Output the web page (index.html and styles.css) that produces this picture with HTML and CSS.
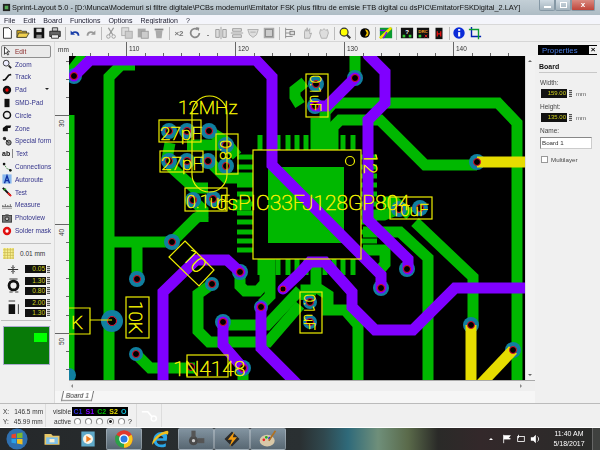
FILE: index.html
```html
<!DOCTYPE html>
<html lang="en">
<head>
<meta charset="utf-8">
<title>Sprint-Layout 5.0</title>
<link rel="stylesheet" href="styles.css">
</head>
<body>
<div class="app">
  <header class="titlebar">
    <svg class="appicon" viewBox="0 0 10 10"><rect x="1" y="1" width="8" height="8" fill="#222"/><rect x="3" y="3" width="4" height="4" fill="#5a5"/></svg>
    <span class="titletext">Sprint-Layout 5.0 - [D:\Munca\Modemuri si filtre digitale\PCBs modemuri\Emitator FSK plus filtru de emisie FTB digital cu dsPIC\EmitatorFSKDigital_2.LAY]</span>
    <div class="winbtns">
      <span class="winbtn"><i class="glyph-min"></i></span>
      <span class="winbtn"><i class="glyph-max"></i></span>
      <span class="winbtn winclose">x</span>
    </div>
  </header>
  <nav class="menubar">
    <span>File</span><span>Edit</span><span>Board</span><span>Functions</span><span>Options</span><span>Registration</span><span>?</span>
  </nav>
  <div class="toolbar">
    <span class="tb"><svg viewBox="0 0 16 16"><path d="M4 2h6l3 3v9H4z" fill="#fff" stroke="#222"/></svg></span>
    <span class="tb"><svg viewBox="0 0 16 16"><path d="M1 5h5l1 1h5v7H1z" fill="#c8a020" stroke="#443"/><path d="M3 8h12l-3 5H1z" fill="#f0d050" stroke="#443"/></svg></span>
    <span class="tb"><svg viewBox="0 0 16 16"><rect x="2" y="2" width="12" height="12" fill="#111"/><rect x="5" y="3" width="6" height="4" fill="#ddd"/><rect x="5" y="10" width="6" height="4" fill="#888"/></svg></span>
    <span class="tb"><svg viewBox="0 0 16 16"><path d="M5 2h6v4H5z" fill="#ccc" stroke="#333"/><path d="M2 6h12v6H2z" fill="#666" stroke="#222"/><path d="M4 10h8v4H4z" fill="#eee" stroke="#333"/></svg></span>
    <span class="sep"></span>
    <span class="tb"><svg viewBox="0 0 16 16"><path d="M12 11c0-4-4-5-7-3" fill="none" stroke="#1a3ea8" stroke-width="2"/><path d="M3 5v5h5z" fill="#1a3ea8"/></svg></span>
    <span class="tb off"><svg viewBox="0 0 16 16"><path d="M4 11c0-4 4-5 7-3" fill="none" stroke="#999" stroke-width="2"/><path d="M13 5v5H8z" fill="#999"/></svg></span>
    <span class="sep"></span>
    <span class="tb off"><svg viewBox="0 0 16 16"><path d="M5 2l5 8M11 2l-5 8" stroke="#999" stroke-width="1.5"/><circle cx="5" cy="12" r="2" fill="none" stroke="#999"/><circle cx="11" cy="12" r="2" fill="none" stroke="#999"/></svg></span>
    <span class="tb off"><svg viewBox="0 0 16 16"><rect x="2" y="2" width="8" height="9" fill="#ddd" stroke="#aaa"/><rect x="6" y="6" width="8" height="8" fill="#ccc" stroke="#aaa"/></svg></span>
    <span class="tb off"><svg viewBox="0 0 16 16"><rect x="2" y="3" width="9" height="10" fill="#aaa"/><rect x="6" y="6" width="8" height="8" fill="#ccc" stroke="#999"/></svg></span>
    <span class="tb off"><svg viewBox="0 0 16 16"><path d="M4 5h8l-1 9H5z" fill="#aaa"/><rect x="3" y="3" width="10" height="2" fill="#888"/></svg></span>
    <span class="sep"></span>
    <span class="tb off txt">×2</span>
    <span class="tb off"><svg viewBox="0 0 16 16"><path d="M13 8a5 5 0 1 1-2-4" fill="none" stroke="#888" stroke-width="2"/><path d="M9 1l4 1-1 4z" fill="#888"/></svg></span>
    <span class="tbarrow"></span>
    <span class="tb off"><svg viewBox="0 0 16 16"><path d="M8 1v14" stroke="#999"/><path d="M2 4h4v9H2zM10 4h4v9h-4z" fill="#ddd" stroke="#999"/></svg></span>
    <span class="tb off"><svg viewBox="0 0 16 16"><path d="M1 8h14" stroke="#999"/><path d="M3 3h10v3H3zM3 10h10v3H3z" fill="#ddd" stroke="#999"/></svg></span>
    <span class="tb off"><svg viewBox="0 0 16 16"><path d="M2 4h12l-2 6-4 3-4-3z" fill="#ddd" stroke="#aaa"/><path d="M5 7h6" stroke="#aaa"/></svg></span>
    <span class="tb off"><svg viewBox="0 0 16 16"><rect x="2" y="2" width="12" height="12" fill="#aaa"/><rect x="4" y="4" width="8" height="8" fill="#ccc" stroke="#888"/></svg></span>
    <span class="sep sep-w"></span>
    <span class="tb off"><svg viewBox="0 0 16 16"><path d="M3 2v12M3 4h8M3 8h5M3 12h8" stroke="#888" fill="none"/><rect x="8" y="6" width="5" height="4" fill="#ddd" stroke="#777"/></svg></span>
    <span class="tb-gap"></span>
    <span class="tb off"><svg viewBox="0 0 16 16"><path d="M4 14V7l1-3 1 2 1-4 1 4 2-3v6l2-1-2 6z" fill="#ddd" stroke="#aaa"/></svg></span>
    <span class="tb off"><svg viewBox="0 0 16 16"><path d="M3 8l1-4 2 1 2-2 2 2 2-1 1 4-2 6H5z" fill="#ddd" stroke="#aaa"/></svg></span>
    <span class="sep sep-w"></span>
    <span class="tb"><svg viewBox="0 0 16 16"><circle cx="7" cy="7" r="4.5" fill="#ff0" stroke="#333" stroke-width="1.4"/><path d="M10 10l4 4" stroke="#333" stroke-width="2.4"/></svg></span>
    <span class="sep"></span>
    <span class="tb"><svg viewBox="0 0 16 16"><circle cx="8" cy="8" r="5.5" fill="#000"/><path d="M8 4a4 4 0 0 1 0 8l2-4z" fill="#f0c000"/></svg></span>
    <span class="sep sep-w"></span>
    <span class="tb"><svg viewBox="0 0 16 16"><rect x="1" y="2" width="14" height="12" fill="#0a9a30"/><path d="M1 14L14 2" stroke="#f0e000" stroke-width="3"/><path d="M1 5h6M5 14l4-7" stroke="#8000ff" stroke-width="1.5"/></svg></span>
    <span class="sep sep-w"></span>
    <span class="tb"><svg viewBox="0 0 16 16"><rect x="1" y="2" width="14" height="12" fill="#111"/><text x="8" y="9" class="tbq">?</text><rect x="3" y="10" width="3" height="3" fill="#3c3"/><rect x="10" y="10" width="3" height="3" fill="#3c3"/></svg></span>
    <span class="tb"><svg viewBox="0 0 16 16"><rect x="1" y="2" width="14" height="12" fill="#111"/><text x="8" y="8" class="tbdrc">DRC</text><rect x="3" y="10" width="3" height="3" fill="#3c3"/><path d="M10 10l3 3M13 10l-3 3" stroke="#e22"/></svg></span>
    <span class="tb"><svg viewBox="0 0 16 16"><rect x="4" y="2" width="8" height="13" fill="#111"/><path d="M6 6v6M10 6v6M6 9h4" stroke="#e11" stroke-width="1.4"/></svg></span>
    <span class="sep"></span>
    <span class="tb"><svg viewBox="0 0 16 16"><circle cx="8" cy="8" r="6.5" fill="#0b2bd8"/><rect x="7" y="7" width="2.4" height="5" fill="#fff"/><rect x="7" y="3.5" width="2.4" height="2" fill="#fff"/></svg></span>
    <span class="tb"><svg viewBox="0 0 16 16"><path d="M4 1v11h11" fill="none" stroke="#0020b0" stroke-width="1.6"/><path d="M1 4h11v11" fill="none" stroke="#0a9a30" stroke-width="1.6"/></svg></span>
  </div>

  <main class="workspace">
    <aside class="tools">
      <div class="tool active"><svg class="ti" viewBox="0 0 12 12"><path d="M3 1v9l2-2 2 3 1-1-2-3h3z" fill="#fff" stroke="#222"/></svg><span class="edit">Edit</span></div>
      <div class="tool"><svg class="ti" viewBox="0 0 12 12"><circle cx="5" cy="5" r="3.5" fill="#eef" stroke="#222"/><path d="M8 8l3 3" stroke="#222" stroke-width="2"/></svg><span>Zoom</span></div>
      <div class="tool"><svg class="ti" viewBox="0 0 12 12"><path d="M1 10l3-1 4-5 3-1" fill="none" stroke="#111" stroke-width="2"/></svg><span>Track</span></div>
      <div class="tool"><svg class="ti" viewBox="0 0 12 12"><circle cx="6" cy="6" r="5" fill="#111"/><circle cx="6" cy="6" r="2" fill="#e00"/></svg><span>Pad</span><i class="drop"></i></div>
      <div class="tool"><svg class="ti" viewBox="0 0 12 12"><rect x="3" y="1" width="6" height="10" fill="#111"/></svg><span>SMD-Pad</span></div>
      <div class="tool"><svg class="ti" viewBox="0 0 12 12"><circle cx="6" cy="6" r="4.2" fill="none" stroke="#111" stroke-width="1.8"/></svg><span>Circle</span></div>
      <div class="tool"><svg class="ti" viewBox="0 0 12 12"><path d="M1 10V6l4-3h6l-1 3H7v4z" fill="#111"/></svg><span>Zone</span></div>
      <div class="tool"><svg class="ti" viewBox="0 0 12 12"><circle cx="3" cy="3" r="2" fill="#333"/><circle cx="8" cy="8" r="3" fill="#888" stroke="#222"/><path d="M3 3l5 5" stroke="#222"/></svg><span>Special form</span></div>
      <div class="tool"><span class="abi">ab</span><span class="texti">Text</span></div>
      <div class="tool"><svg class="ti" viewBox="0 0 12 12"><path d="M2 2l4 6 5 2" fill="none" stroke="#383" stroke-dasharray="2 1"/><circle cx="2.5" cy="2.5" r="1.6" fill="#111"/><circle cx="10" cy="10" r="1.6" fill="#111"/></svg><span>Connections</span></div>
      <div class="tool"><svg class="ti" viewBox="0 0 12 12"><rect x="0.500" y="0.500" width="11" height="11" fill="#8ab8ee"/><path d="M3 11L6 2l3 9M4 8h4" fill="none" stroke="#1030a0" stroke-width="1.6"/></svg><span>Autoroute</span></div>
      <div class="tool"><svg class="ti" viewBox="0 0 12 12"><path d="M1 1l9 9" stroke="#111" stroke-width="2.400"/><path d="M7 7l4 4" stroke="#e22" stroke-width="2"/><path d="M2 4l3-2" stroke="#2a2" stroke-width="1.500"/></svg><span>Test</span></div>
      <div class="tool"><svg class="ti" viewBox="0 0 12 12"><path d="M0 8h12M1 8V6M4 8V5M7 8V6M10 8V5" stroke="#555" fill="none"/><path d="M0 10h12" stroke="#999"/></svg><span>Measure</span></div>
      <div class="tool"><svg class="ti" viewBox="0 0 12 12"><rect x="0.500" y="3" width="11" height="8" fill="#777" stroke="#333"/><rect x="4" y="1.500" width="4" height="2" fill="#555"/><circle cx="6" cy="7" r="2.200" fill="#bbb" stroke="#222"/></svg><span>Photoview</span></div>
      <div class="tool"><svg class="ti" viewBox="0 0 12 12"><circle cx="6" cy="6" r="5" fill="#e01010"/><circle cx="6" cy="6" r="2" fill="#fff"/></svg><span>Solder mask</span></div>
      <hr class="panelrule">
      <div class="gridrow">
        <svg class="gridicon" viewBox="0 0 12 12"><rect width="12" height="12" fill="#f8f090"/><path d="M2 0v12M5 0v12M8 0v12M11 0v12M0 2h12M0 5h12M0 8h12M0 11h12" stroke="#c8b850" stroke-width="0.800"/></svg>
        <span>0.01 mm</span>
      </div>
      <div class="numrow"><svg class="ni" viewBox="0 0 14 10"><path d="M1 5h12M7 0v3M7 10V7" stroke="#111"/><path d="M5 2l2 2 2-2M5 8l2-2 2 2" fill="none" stroke="#111"/></svg><span class="lcd">0.05</span><i class="spin"></i></div>
      <div class="numgroup">
        <svg class="padicon" viewBox="0 0 16 20"><circle cx="8" cy="10" r="5.500" fill="none" stroke="#111" stroke-width="3.400"/><path d="M3 2h10M3 18h4M10 18h4" stroke="#111"/></svg>
        <div class="numcol">
          <div class="numline"><span class="lcd">1.30</span><i class="spin"></i></div>
          <div class="numline"><span class="lcd">0.80</span><i class="spin"></i></div>
        </div>
      </div>
      <div class="numgroup smdgroup">
        <svg class="padicon" viewBox="0 0 16 20"><rect x="2" y="6" width="8" height="12" fill="#111"/><path d="M2 2h8M14 6v12" stroke="#111"/></svg>
        <div class="numcol">
          <div class="numline"><span class="lcd">2.00</span><i class="spin"></i></div>
          <div class="numline"><span class="lcd">1.30</span><i class="spin"></i></div>
        </div>
      </div>
      <hr class="panelrule rule2">
      <div class="preview"><span class="previewview"></span></div>
    </aside>

    <section class="center">
      <div class="hruler">
        <span class="mm">mm</span>
        <svg class="hrulersvg" viewBox="0 0 466 14">
          <g class="tick">
            <path d="M17.500 14v-3M35.500 14v-3M53.500 14v-3M71.500 14V0M90.500 14v-3M108.500 14v-3M126.500 14v-3M144.500 14v-3M162.500 14v-3M180.500 14V0M199.500 14v-3M217.500 14v-3M235.500 14v-3M253.500 14v-3M271.500 14v-3M289.500 14V0M308.500 14v-3M326.500 14v-3M344.500 14v-3M362.500 14v-3M380.500 14v-3M398.500 14V0M417.500 14v-3M435.500 14v-3M453.500 14v-3"/>
          </g>
          <text x="74" y="9" class="rtext">110</text>
          <text x="183" y="9" class="rtext">120</text>
          <text x="292" y="9" class="rtext">130</text>
          <text x="401" y="9" class="rtext">140</text>
        </svg>
      </div>
      <div class="boardrow">
        <svg class="vruler" viewBox="0 0 14 324">
          <g class="tick"><path d="M11 5.500h3M11 23.500h3M11 41.500h3M0 59.500h14M11 77.500h3M11 95.500h3M11 113.500h3M11 131.500h3M11 150.500h3M0 168.500h14M11 186.500h3M11 204.500h3M11 222.500h3M11 240.500h3M11 259.500h3M0 277.500h14M11 295.500h3M11 313.500h3"/></g>
          <text class="rtext" x="9" y="71" transform="rotate(-90 9 71)">30</text>
          <text class="rtext" x="9" y="180" transform="rotate(-90 9 180)">40</text>
          <text class="rtext" x="9" y="289" transform="rotate(-90 9 289)">50</text>
        </svg>
        <svg class="board" viewBox="69 56 456 324" aria-label="PCB layout">
          <rect x="69" y="56" width="456" height="324" fill="#000"/>
          <g class="green">
            <path d="M69 115V380"/>
            <path d="M66 78L84 55"/>
            <path d="M109 380V77l12-12h14"/>
            <path d="M109 242H172l24-24 10-5"/>
            <path d="M137 242V279"/>
            <path d="M136 354l14 14h45"/>
            <path d="M243 368v14"/>
            <path d="M355 56V78"/>
            <path d="M325 150V112l8-9H498l19 20V380"/>
            <path d="M333 150V127l7-7H380l45 45H477"/>
            <path d="M300 105l-5-8V90l10-8"/>
            <path d="M316 150V118"/>
            <path d="M212 284l-14 10V331l11 11h59l32-37"/>
            <path d="M223 325h44l33-35"/>
            <path d="M240 272v14l5 5h13l7-8V259"/>
            <path d="M270 259V296l-8 8"/>
            <path d="M316 259V287l12 8v15h17l13 15V380"/>
            <path d="M363 232H400l28 26V380"/>
            <path d="M415 222l58 55v48"/>
            <path d="M363 250h22v14l-6 7"/>
            <path d="M187 145H222"/>
            <path d="M170 143l-3 16 5 9 22 20h14"/>
            <path d="M209 161l17 17h27"/>
            <path d="M209 131l16 10 12 15"/>
            <path d="M233 205h18"/>
            <path d="M410 215l-15-13h-12"/>
            <path d="M399 209l-15 6h-22"/>
            <path d="M193 200l10 10v12"/>
            <path d="M316 290h-10v10"/>
          </g>
          <g class="pins">
            <path d="M260 135v15M270 135v15M278 135v15M288 135v15M297 135v15M306 135v15M316 135v15M325 135v15M334 135v15M343 135v15M353 135v15"/>
            <path d="M237 157h16M237 167h16M237 176h16M237 185h16M237 194h16M237 204h16M237 213h16M237 222h16M237 232h16M237 241h16M237 250h16"/>
            <path d="M361 157h16M361 167h16M361 176h16M361 185h16M361 194h16M361 204h16M361 213h16M361 222h16M361 232h16M361 241h16M361 250h16"/>
            <path d="M260 259v16M270 259v16M278 259v16M288 259v16M297 259v16M306 259v16M316 259v16M325 259v16M334 259v16M343 259v16M353 259v16"/>
          </g>
          <rect class="gpad" x="268" y="167" width="76" height="76"/>
          <g class="teal">
            <circle cx="74" cy="76" r="8"/><circle cx="169" cy="131" r="8"/><circle cx="187" cy="131" r="8"/><circle cx="209" cy="131" r="8"/>
            <circle cx="169" cy="161" r="8"/><circle cx="187" cy="161" r="8"/><circle cx="208" cy="161" r="8"/><circle cx="226" cy="145" r="8"/>
            <circle cx="226" cy="166" r="8"/><circle cx="193" cy="200" r="8"/><circle cx="213" cy="199" r="8"/><circle cx="316" cy="84" r="8"/>
            <circle cx="315" cy="106" r="8"/><circle cx="355" cy="78" r="8"/><circle cx="477" cy="162" r="8"/><circle cx="399" cy="209" r="8"/>
            <circle cx="420" cy="208" r="8"/><circle cx="172" cy="242" r="8"/><circle cx="137" cy="279" r="8"/><circle cx="240" cy="272" r="8"/>
            <circle cx="212" cy="284" r="7"/><circle cx="112" cy="321" r="11"/><circle cx="223" cy="322" r="8"/><circle cx="261" cy="307" r="7"/>
            <circle cx="136" cy="354" r="7"/><circle cx="243" cy="368" r="8"/><circle cx="69" cy="375" r="7"/><circle cx="381" cy="288" r="8"/>
            <circle cx="407" cy="269" r="8"/><circle cx="471" cy="325" r="8"/><circle cx="513" cy="350" r="8"/><circle cx="310" cy="302" r="7"/><circle cx="310" cy="322" r="7"/>
          </g>
          <g class="purple">
            <path d="M74 76L90 60H256l16 17V165L381 275v13"/>
            <path d="M368 55l17 17V103l-17 17V220l40 39v10"/>
            <path d="M355 78L327 106H315"/>
            <path d="M163 382V292l33-32h31l13 12"/>
            <path d="M223 322v23l20 23"/>
            <path d="M261 307v41l36 36"/>
            <path d="M283 289l17-16 10-11h15l27 30v15l23 23h38l42-42h70"/>
          </g>
          <g class="yellowtrace">
            <path d="M477 162H525"/>
            <path d="M471 325V382"/>
            <path d="M513 350l-34 36"/>
          </g>
          <g class="holes">
            <circle cx="74" cy="76" r="3.500"/><circle cx="169" cy="131" r="3.500"/><circle cx="187" cy="131" r="3.500"/><circle cx="209" cy="131" r="3.500"/>
            <circle cx="169" cy="161" r="3.500"/><circle cx="187" cy="161" r="3.500"/><circle cx="208" cy="161" r="3.500"/><circle cx="226" cy="145" r="3.500"/>
            <circle cx="226" cy="166" r="3.500"/><circle cx="193" cy="200" r="3.500"/><circle cx="213" cy="199" r="3.500"/><circle cx="316" cy="84" r="3.500"/>
            <circle cx="315" cy="106" r="3.500"/><circle cx="355" cy="78" r="3.500"/><circle cx="477" cy="162" r="3.500"/><circle cx="399" cy="209" r="3.500"/>
            <circle cx="420" cy="208" r="3.500"/><circle cx="172" cy="242" r="3.500"/><circle cx="137" cy="279" r="3.500"/><circle cx="240" cy="272" r="3.500"/>
            <circle cx="212" cy="284" r="3.500"/><circle cx="112" cy="321" r="4.500"/><circle cx="223" cy="322" r="3.500"/><circle cx="261" cy="307" r="3.500"/>
            <circle cx="136" cy="354" r="3.500"/><circle cx="191" cy="367" r="3.500"/><circle cx="243" cy="368" r="3.500"/><circle cx="381" cy="288" r="3.500"/>
            <circle cx="407" cy="269" r="3.500"/><circle cx="471" cy="325" r="3.500"/><circle cx="513" cy="350" r="3.500"/><circle cx="310" cy="302" r="3.500"/><circle cx="310" cy="322" r="3.500"/><circle cx="283" cy="289" r="3"/>
          </g>
          <g class="outline">
            <rect x="253" y="150" width="108" height="109"/>
            <circle cx="350" cy="161" r="4.500"/>
            <rect x="159" y="120" width="42" height="22"/>
            <rect x="160" y="151" width="43" height="21"/>
            <rect x="192" y="96" width="35" height="96" rx="17.500"/>
            <rect x="216" y="134" width="22" height="40"/>
            <rect x="185" y="188" width="42" height="23"/>
            <rect x="306" y="74" width="22" height="43"/>
            <rect x="390" y="197" width="42" height="22"/>
            <path d="M185 241L214 270 199 286 169 257z"/>
            <rect x="126" y="297" width="23" height="41"/>
            <path d="M69 308H90V334H69M90 320H112"/>
            <rect x="187" y="355" width="41" height="22"/>
            <rect x="300" y="292" width="22" height="41"/>
          </g>
          <g class="silk">
            <text x="178" y="114" class="s19">12MHz</text>
            <text x="160" y="140" class="s19">27pF</text>
            <text x="161" y="170" class="s19">27pF</text>
            <text x="186" y="208" class="s18">0.1uF</text>
            <text x="216" y="210" class="s21">dsPIC33FJ128GP804</text>
            <text x="391" y="216" class="s17">10uF</text>
            <text x="173" y="376" class="s21">1N4148</text>
            <text x="71" y="329" class="s19">K</text>
            <text transform="translate(220 140)  rotate(90)" class="s15">0.8</text>
            <text transform="translate(310 75) rotate(90)" class="s15">0.1uF</text>
            <text transform="translate(364 153) rotate(90)" class="s19">12</text>
            <text transform="translate(129 301) rotate(90)" class="s19">10K</text>
            <text transform="translate(181 258) rotate(45)" class="s21">10</text>
            <text transform="translate(304 294) rotate(90)" class="s15">0.1uF</text>
          </g>
        </svg>
        <div class="vscroll"><i class="arrowup"></i><i class="arrowdown"></i></div>
      </div>
      <div class="hscroll"><i class="arrowleft"></i><i class="arrowright"></i></div>
      <div class="tabs"><span class="tab">Board 1</span></div>
    </section>

    <aside class="props">
      <div class="propshead"><span>Properties</span><b class="propsx">×</b></div>
      <h2 class="propstitle">Board</h2>
      <label class="plabel">Width:</label>
      <div class="pfield"><span class="plcd">159.00</span><i class="spin"></i><span>mm</span></div>
      <label class="plabel">Height:</label>
      <div class="pfield"><span class="plcd">135.00</span><i class="spin"></i><span>mm</span></div>
      <label class="plabel">Name:</label>
      <div class="pname">Board 1</div>
      <div class="pcheck"><i class="check"></i><span>Multilayer</span></div>
    </aside>
  </main>

  <footer class="status">
    <div class="coords"><div><span>X:</span><span>146.5 mm</span></div><div><span>Y:</span><span>45.99 mm</span></div></div>
    <div class="layers">
      <div class="layerrow"><span class="llabel">visible</span><div class="layerbox"><b class="c1">C1</b><b class="s1">S1</b><b class="c2">C2</b><b class="s2">S2</b><b class="o">O</b></div></div>
      <div class="layerrow"><span class="llabel">active</span><div class="radios"><i></i><i></i><i></i><i class="on"></i><i></i></div><span class="q">?</span></div>
    </div>
    <div class="ratcell"><svg viewBox="0 0 20 16"><path d="M1 3h7l5 6" fill="none" stroke="#fff" stroke-width="2"/><circle cx="15" cy="11" r="3" fill="none" stroke="#fff" stroke-width="1.600"/></svg></div>
    <div class="statusrest"></div>
  </footer>

  <div class="taskbar">
    <span class="start"><svg viewBox="0 0 24 24"><circle cx="12" cy="12" r="11.500" fill="#2f6fae"/><path d="M6 7l5-1v5H6z" fill="#e8452c"/><path d="M12 6l6-1v6h-6z" fill="#7cb82f"/><path d="M6 12h5v5l-5-1z" fill="#2b9fe6"/><path d="M12 12h6v6l-6-1z" fill="#f4c020"/></svg></span>
    <span class="tapp"><svg viewBox="0 0 24 24"><path d="M3 6h8l2 2h8v11H3z" fill="#e8c868"/><rect x="5" y="10" width="14" height="8" fill="#7fc0e8"/><rect x="9" y="12" width="6" height="4" fill="#f8f0d0"/></svg></span>
    <span class="tapp"><svg viewBox="0 0 24 24"><rect x="4" y="3" width="16" height="18" fill="#5fa9c9"/><circle cx="12" cy="12" r="6" fill="#f8f4e8"/><path d="M10 8l6 4-6 4z" fill="#f07a1a"/></svg></span>
    <span class="tapp lit"><svg viewBox="0 0 24 24"><circle cx="12" cy="12" r="10.500" fill="#e0392d"/><path d="M12 12L21 7A10.500 10.500 0 0 1 12 22.500z" fill="#f8c81a"/><path d="M12 12L12 22.500A10.500 10.500 0 0 1 2.500 7z" fill="#2aa14a"/><circle cx="12" cy="12" r="5" fill="#2c7be5" stroke="#fff" stroke-width="1.600"/></svg></span>
    <span class="tapp"><svg viewBox="0 0 24 24"><path d="M20 14H8c0 5 7 6 11 3v4c-8 3-15-1-15-8 0-7 7-11 13-9 4 1 4 6 3 10zM8 11h8c0-4-7-4-8 0z" fill="#2aa7e8"/><path d="M3 19C1 13 12 3 21 2c2 1 1 3 0 5-2-3-12 2-18 12z" fill="#f0c020"/></svg></span>
    <span class="tapp lit"><svg viewBox="0 0 24 24"><circle cx="9" cy="14" r="5.500" fill="#4a4a4a"/><rect x="6.500" y="2" width="5" height="8" fill="#555"/><rect x="14" y="11" width="8" height="6" fill="#555"/><circle cx="9" cy="14" r="2" fill="#ccc"/></svg></span>
    <span class="tapp lit"><svg viewBox="0 0 24 24"><path d="M12 3l9 9-9 9-9-9z" fill="#2a2a2a"/><path d="M15 3L7 13h5l-3 8 9-11h-5z" fill="#f09a10"/></svg></span>
    <span class="tapp lit"><svg viewBox="0 0 24 24"><ellipse cx="11" cy="14" rx="9" ry="7" fill="#d8c8a8"/><circle cx="7" cy="13" r="1.600" fill="#e22"/><circle cx="10" cy="10" r="1.600" fill="#2a2"/><circle cx="14" cy="11" r="1.600" fill="#22d"/><path d="M21 2L13 14" stroke="#b07020" stroke-width="2"/></svg></span>
    <div class="tray">
      <i class="trayup"></i>
      <svg viewBox="0 0 12 12"><path d="M2 1v10M2 2h8l-2 2 2 2H2" fill="#fff" stroke="#fff"/></svg>
      <svg viewBox="0 0 12 12"><rect x="2" y="3" width="8" height="6" fill="none" stroke="#fff"/><path d="M3 1v4" stroke="#fff"/></svg>
      <svg viewBox="0 0 12 12"><path d="M1 4h3l3-3v10L4 8H1z" fill="#fff"/><path d="M9 3a4 4 0 0 1 0 6" fill="none" stroke="#fff"/></svg>
      <div class="clock"><span>11:40 AM</span><span>5/18/2017</span></div>
    </div>
    <span class="showdesk"></span>
  </div>
</div>
</body>
</html>
```
FILE: styles.css
```css
* { box-sizing: border-box; }
html, body { margin: 0; padding: 0; background: #f0f0f0; }
body { width: 600px; height: 450px; overflow: hidden; font-family: "Liberation Sans", Arial, sans-serif; font-size: 7px; color: #222; }
.app { width: 600px; height: 450px; display: flex; flex-direction: column; filter: blur(0.3px); }

.titlebar { height: 15px; display: flex; align-items: center; padding-left: 2px; background: linear-gradient(#c3cfd6, #aebcc5); font-size: 7.42px; color: #111; }
.appicon { width: 9px; height: 9px; margin-right: 1px; flex: none; }
.titletext { white-space: nowrap; flex: none; }
.winbtns { margin-left: auto; margin-right: 5px; display: flex; height: 11px; align-self: flex-start; flex: none; }
.winbtn { width: 16px; display: flex; align-items: center; justify-content: center; background: linear-gradient(#cfdae2, #a4b3bd); border: 1px solid #8598a5; border-top: 0; border-radius: 0 0 2px 2px; }
.winclose { width: 24px; background: linear-gradient(#d98a80, #c0453a); color: #fff; font-weight: bold; font-size: 8px; line-height: 1; }
.glyph-min { width: 7px; height: 2px; background: #fff; margin-top: 4px; }
.glyph-max { width: 7px; height: 6px; border: 1px solid #fff; }

.menubar { height: 9px; display: flex; align-items: center; padding: 2px 0 0 4px; gap: 8px; background: #f4f5fb; font-size: 7px; color: #223; }

.toolbar { height: 18px; display: flex; align-items: center; margin-left: -1px; background: #f0f0f0; border-top: 1px solid #d8d8d8; border-bottom: 1px solid #d6d6d6; }
.tb { width: 16px; height: 16px; display: flex; align-items: center; justify-content: center; flex: none; }
.tb svg { width: 14px; height: 14px; }
.tb.txt { color: #777; font-weight: bold; font-size: 8px; }
.tbq { font-family: "Liberation Sans", sans-serif; font-size: 7px; fill: #fff; text-anchor: middle; font-weight: bold; }
.tbdrc { font-family: "Liberation Sans", sans-serif; font-size: 5px; fill: #f0a020; text-anchor: middle; font-weight: bold; }
.sep { width: 4px; height: 13px; flex: none; background: linear-gradient(#bbb, #bbb) center / 1px 100% no-repeat; }
.sep-w { width: 5px; }
.tb-gap { width: 2px; flex: none; }
.tbarrow { width: 10px; height: 16px; flex: none; background: conic-gradient(from 150deg at 50% 60%, #888 60deg, transparent 0) center / 6px 5px no-repeat; }

.workspace { height: 361px; display: flex; background: #f0f0f0; }
.tools { width: 55px; flex: none; padding: 3px 3px 0 1px; display: flex; flex-direction: column; border-right: 1px solid #dcdcdc; }
.tool { height: 12.8px; flex: none; display: flex; align-items: center; gap: 3px; padding-left: 1px; color: #33338a; font-size: 6.5px; white-space: nowrap; position: relative; }
.tool.active { border: 1px solid #8f8f8f; border-radius: 2px; background: #eaeaea; padding-left: 0; }
.edit { color: #8a2a2a; }
.ti { width: 10px; height: 10px; flex: none; }
.abi { font-weight: bold; color: #111; font-size: 7px; width: 11px; border-right: 1px solid #888; line-height: 9px; flex: none; }
.texti { margin-left: 0; }
.drop { position: absolute; right: 2px; top: 5px; border: 2.5px solid transparent; border-top-color: #222; border-bottom: 0; }
.panelrule { width: 100%; margin: 6px 0 0; border: 0; border-top: 1px solid #c0c0c0; flex: none; }
.gridrow { display: flex; align-items: center; gap: 6px; padding: 4px 0 0 2px; font-size: 6.5px; color: #333; }
.gridicon { width: 11px; height: 11px; flex: none; }
.numrow { display: flex; align-items: center; padding: 6px 0 0 6px; }
.ni { width: 12px; height: 9px; margin-right: 6px; flex: none; }
.lcd { width: 21px; height: 8px; background: #111; color: #d0d020; font-size: 6.5px; line-height: 8px; text-align: right; padding-right: 1px; flex: none; }
.spin { width: 3px; height: 7px; margin-left: 1px; background: repeating-linear-gradient(#555 0 1px, #ccc 1px 2px); flex: none; display: inline-block; }
.numgroup { display: flex; align-items: center; padding: 3px 0 0 6px; }
.smdgroup { padding-top: 4px; }
.padicon { width: 13px; height: 17px; margin-right: 5px; flex: none; }
.numcol { display: flex; flex-direction: column; gap: 2px; }
.numline { display: flex; align-items: center; }
.rule2 { margin-top: 3px; }
.preview { width: 47px; height: 39px; margin: 5px 0 0 2px; background: #087a08; border: 1px solid #aac; position: relative; flex: none; }
.previewview { position: absolute; left: 30px; top: 6px; width: 13px; height: 9px; background: #00ff00; }

.center { width: 480px; flex: none; display: flex; flex-direction: column; }
.hruler { height: 14px; display: flex; align-items: stretch; position: relative; flex: none; }
.mm { position: absolute; left: 3px; top: 4px; font-size: 6.5px; color: #333; }
.hrulersvg { width: 466px; height: 14px; flex: none; }
.tick path { stroke: #666; stroke-width: 1; fill: none; }
.rtext { font-family: "Liberation Sans", sans-serif; font-size: 6.5px; fill: #333; }
.boardrow { height: 324px; display: flex; flex: none; }
.vruler { width: 14px; height: 324px; flex: none; }
.board { width: 456px; height: 324px; flex: none; display: block; }
.vscroll { width: 10px; flex: none; background: #f2f2f2; border-left: 1px solid #ddd; position: relative; }
.arrowup, .arrowdown, .arrowleft, .arrowright { position: absolute; border: 2.5px solid transparent; }
.arrowup { left: 2px; top: 4px; border-top: 0; border-bottom-color: #666; }
.arrowdown { left: 2px; bottom: 4px; border-bottom: 0; border-top-color: #666; }
.hscroll { height: 11px; flex: none; background: #efefef; border-top: 1px solid #aaa; position: relative; margin-left: 14px; }
.arrowleft { left: 2px; top: 3px; border-left: 0; border-right-color: #888; }
.arrowright { right: 13px; top: 3px; border-right: 0; border-left-color: #888; }
.tabs { height: 12px; flex: none; padding-left: 7px; background: #f6f6f6; }
.tab { display: inline-block; height: 10px; padding: 0 3px; font-size: 6.5px; line-height: 9px; color: #222; border: 1px solid #777; border-top: 0; transform: skewX(-12deg); background: #fff; }

.green path { stroke: #00b800; stroke-width: 11; fill: none; stroke-linejoin: miter; }
.pins path { stroke: #00b800; stroke-width: 5; fill: none; }
.gpad { fill: #00b800; }
.teal circle { fill: #107f9f; }
.purple path { stroke: #8000ff; stroke-width: 11; fill: none; stroke-linecap: round; stroke-linejoin: miter; }
.yellowtrace path { stroke: #e6dc00; stroke-width: 11; fill: none; }
.holes circle { fill: #000; stroke: #e01030; stroke-width: 1; }
.outline rect, .outline path, .outline circle { fill: none; stroke: #eeee00; stroke-width: 1.2; }
.silk text { fill: #eeee00; stroke: #eeee00; stroke-width: 0.55px; font-family: Roboto, "Liberation Sans", sans-serif; font-weight: 100; }
.s15 { font-size: 15px; }
.s17 { font-size: 17px; }
.s18 { font-size: 18px; }
.s19 { font-size: 19px; }
.s21 { font-size: 21px; }

.props { width: 65px; flex: none; padding: 3px 3px 0 3px; display: flex; flex-direction: column; background: #f0f0f0; }
.propshead { height: 10px; display: flex; align-items: center; justify-content: space-between; background: #000; color: #4a7ce0; font-size: 7.8px; padding-left: 4px; flex: none; }
.propsx { width: 8px; height: 8px; background: #eee; color: #000; font-size: 8px; line-height: 8px; text-align: center; }
.propstitle { margin: 7px 0 0 1px; height: 11px; font-size: 7px; line-height: 9px; font-weight: bold; color: #111; border-bottom: 1px solid #c8c8c8; flex: none; }
.plabel { margin: 5px 0 0 2px; font-size: 6.5px; line-height: 9px; color: #444; }
.plabel ~ .plabel { margin-top: 4px; }
.pfield { display: flex; align-items: center; margin: 2px 0 0 3px; font-size: 6px; color: #555; gap: 1px; height: 9px; }
.pfield span:last-child { margin-left: 3px; }
.plcd { width: 26px; height: 9px; background: #111; color: #d0d020; font-size: 6px; line-height: 9px; text-align: right; padding-right: 1px; }
.pname { margin: 2px 0 0 2px; width: 52px; height: 12px; border: 1px solid #ccc; border-top-color: #888; border-left-color: #888; background: #fff; font-size: 6.2px; line-height: 10px; padding-left: 1px; color: #333; flex: none; }
.pcheck { display: flex; align-items: center; gap: 3px; margin: 7px 0 0 3px; font-size: 6.2px; color: #444; }
.check { width: 7px; height: 7px; border: 1px solid #999; background: #fff; flex: none; }

.status { height: 24px; display: flex; background: #f0f0f0; border-top: 1px solid #bbb; flex: none; }
.coords { width: 45px; padding: 3px 0 0 3px; font-size: 6.5px; line-height: 9.5px; color: #333; flex: none; }
.coords div { display: flex; gap: 5px; white-space: nowrap; }
.layers { width: 92px; padding: 3px 0 0 0; border-left: 1px solid #ddd; border-right: 1px solid #ddd; flex: none; }
.layerrow { display: flex; align-items: center; height: 9.5px; }
.llabel { width: 25px; font-size: 6.5px; color: #333; flex: none; text-align: right; }
.layerbox { width: 56px; height: 9px; margin-left: 1px; background: #000; display: flex; justify-content: space-around; align-items: center; font-size: 7px; }
.c1 { color: #2a2ae0; } .s1 { color: #8000ff; } .c2 { color: #00b800; } .s2 { color: #e6dc00; } .o { color: #10c0d8; }
.radios { display: flex; gap: 4px; margin-left: 3px; }
.radios i { width: 7px; height: 7px; border-radius: 50%; border: 1px solid #888; border-bottom-color: #ddd; display: block; background: #fff; }
.radios i.on { background: radial-gradient(#222 35%, #fff 45%); }
.q { font-size: 7px; margin-left: 3px; }
.ratcell { width: 25px; display: flex; align-items: center; justify-content: center; border-right: 1px solid #ddd; flex: none; }
.ratcell svg { width: 17px; height: 14px; }
.statusrest { flex: 1; }

.taskbar { height: 23px; flex: none; display: flex; align-items: center; border-top: 1px solid #fff; background: linear-gradient(90deg, #25282a 0, #2a3032 50%, #30484e 54%, #2f6a7a 58%, #6f8f7a 63%, #5a6a4a 68%, #2a2a28 73%, #33282a 80%, #2a2c2a 100%); }
.start { width: 34px; display: flex; justify-content: center; flex: none; }
.start svg { width: 22px; height: 22px; }
.tapp { width: 36px; height: 22px; display: flex; align-items: center; justify-content: center; flex: none; margin-right: 0; }
.tapp svg { width: 20px; height: 20px; }
.lit { background: linear-gradient(rgba(190,215,235,0.6), rgba(160,190,215,0.4)); border: 1px solid rgba(255,255,255,0.25); border-radius: 2px; }
.tray { margin-left: auto; display: flex; align-items: center; gap: 4px; color: #fff; padding-right: 4px; flex: none; }
.tray svg { width: 10px; height: 10px; flex: none; }
.trayup { border: 2.5px solid transparent; border-bottom-color: #fff; border-top: 0; margin-right: 5px; }
.clock { display: flex; flex-direction: column; align-items: center; font-size: 7px; line-height: 10px; margin-left: 6px; width: 38px; }
.showdesk { width: 8px; height: 22px; border-left: 1px solid #666; background: rgba(255,255,255,0.1); flex: none; }
```
